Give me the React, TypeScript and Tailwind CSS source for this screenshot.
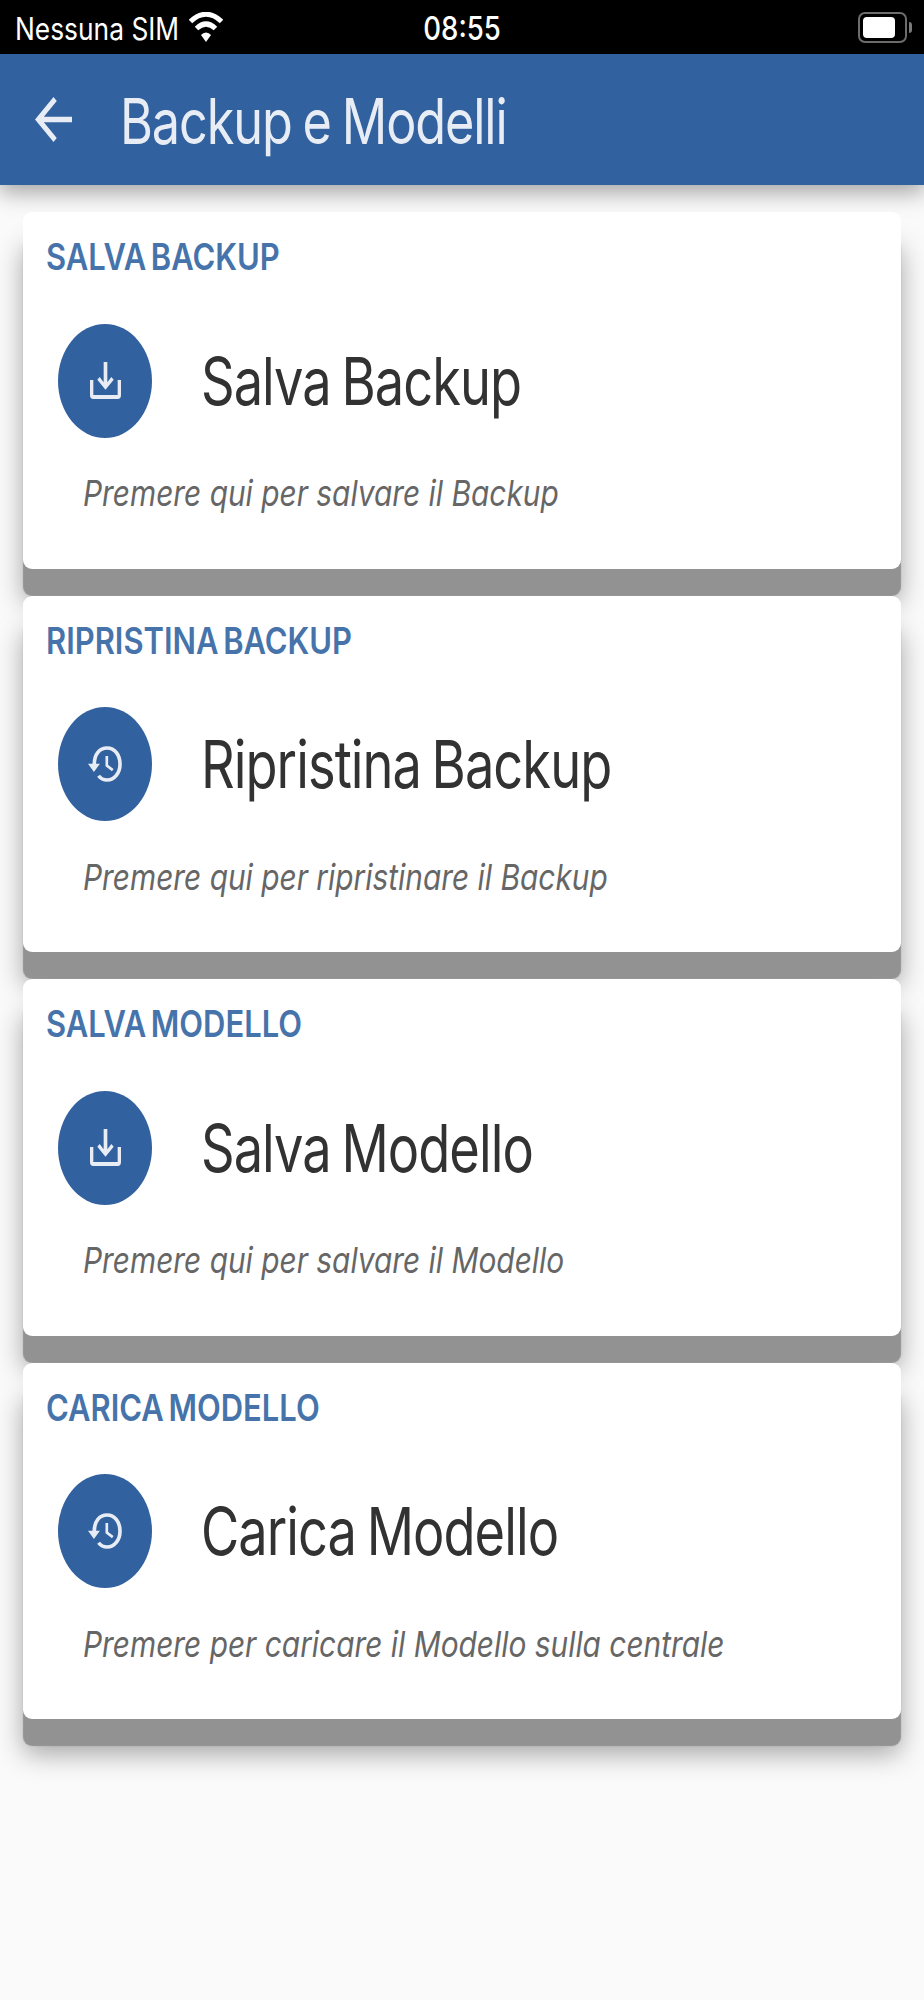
import React from "react";

function DownloadIcon() {
  return (
    <svg width="31" height="37" viewBox="0 0 93 111" preserveAspectRatio="none" fill="#e8edf5">
      <path d="M0 54H10V99H83V54H93V100Q93 111 83 111H10Q0 111 0 100Z" />
      <path d="M41 0H52V61L64 45L71 53L46.5 83L22 53L29 45L41 61Z" />
    </svg>
  );
}

function HistoryIcon() {
  return (
    <svg className="mr-px" width="34" height="36" viewBox="0 0 103 109" preserveAspectRatio="none" fill="none">
      <path d="M19 56C19 24 35 6 58 6C81 6 97 28 97 54.500C97 82 80 103 58 103C47 103 38 98 32 90" stroke="#e8edf5" strokeWidth="11" />
      <path d="M0 54H36L18 79Z" fill="#e8edf5" />
      <path d="M57 30V59L75 73" stroke="#e8edf5" strokeWidth="8" />
    </svg>
  );
}

const sections = [
  { header: "SALVA BACKUP", title: "Salva Backup", note: "Premere qui per salvare il Backup", Icon: DownloadIcon },
  { header: "RIPRISTINA BACKUP", title: "Ripristina Backup", note: "Premere qui per ripristinare il Backup", Icon: HistoryIcon },
  { header: "SALVA MODELLO", title: "Salva Modello", note: "Premere qui per salvare il Modello", Icon: DownloadIcon },
  { header: "CARICA MODELLO", title: "Carica Modello", note: "Premere per caricare il Modello sulla centrale", Icon: HistoryIcon },
];

export default function App() {
  return (
    <div className="flex h-[2000px] w-[924px] flex-col overflow-hidden bg-[#fafafa] font-['Inter',sans-serif]">
      <div className="grid h-[54px] shrink-0 grid-cols-3 items-center bg-black text-white">
        <div className="flex items-center pl-[15px]">
          <div className="w-[174px] whitespace-nowrap">
            <span className="inline-block origin-left scale-x-[0.85] pt-[4px] text-[31px] leading-[38px]">Nessuna SIM</span>
          </div>
          <svg width="34" height="30" viewBox="0 0 34 30" fill="none" stroke="white">
            <path d="M1.500 9.500Q17 -5 32.500 9.500" strokeWidth="5" />
            <path d="M7.500 16.500Q17 7.500 26.500 16.500" strokeWidth="5" />
            <path d="M17 20.500Q20 20.500 22 23L17 30L12 23Q14 20.500 17 20.500Z" fill="white" stroke="none" />
          </svg>
        </div>
        <div className="text-center">
          <span className="inline-block scale-x-[0.86] pt-[4px] text-[32px] leading-[38px] font-medium">08:55</span>
        </div>
        <div className="flex items-center justify-end pr-[12px]">
          <div className="h-[31px] w-[49px] rounded-[7px] border-2 border-[#6e6e6e] p-[3px]">
            <div className="h-[21px] w-[32px] rounded-[4px] bg-white" />
          </div>
          <div className="ml-[2px] h-[11px] w-[3px] rounded-r-full bg-[#7a7a7a]" />
        </div>
      </div>
      <header className="flex h-[131px] shrink-0 items-center bg-[#32619f] pl-[35px] text-[#e8edf5] shadow-[0_6px_22px_1px_rgba(0,0,0,0.36)]">
        <svg width="37" height="45" viewBox="4 4 16 16" preserveAspectRatio="none" fill="currentColor">
          <path d="M20 11H7.830l5.590-5.590L12 4l-8 8 8 8 1.410-1.410L7.830 13H20z" />
        </svg>
        <h1 className="ml-[48px] origin-left scale-x-[0.8] pt-[2px] text-[63px] leading-[76px] tracking-[-1.4px] whitespace-nowrap [word-spacing:-2.700px]">Backup e Modelli</h1>
      </header>
      <main className="flex flex-col gap-[27px] px-[23px] pt-[27px]">
        {sections.map(({ header, title, note, Icon }) => (
          <section key={header} className="flex h-[356.600px] flex-col rounded-[9px] bg-white shadow-[0_27px_1px_0_#929292,0_35px_27px_0_rgba(0,0,0,0.34)]">
            <h2 className="mt-[22px] ml-[23px] origin-left scale-x-[0.836] self-start text-[37px] leading-[46px] font-semibold whitespace-nowrap text-[#4773ab] [word-spacing:-3.800px]">{header}</h2>
            <div className="mt-[43.500px] flex h-[114px] items-center pl-[35px]">
              <div className="flex h-[114px] w-[94px] shrink-0 items-center justify-center rounded-[50%] bg-[#32619f]">
                <Icon />
              </div>
              <span className="ml-[49px] origin-left scale-x-[0.8] pt-[2px] text-[65.500px] leading-[80px] tracking-[-1.2px] whitespace-nowrap text-[#323232] [word-spacing:-4px]">{title}</span>
            </div>
            <p className="mt-[32.500px] ml-[60px] origin-left scale-x-[0.829] self-start text-[36px] leading-[46px] whitespace-nowrap text-[#666] italic">{note}</p>
          </section>
        ))}
      </main>
    </div>
  );
}
